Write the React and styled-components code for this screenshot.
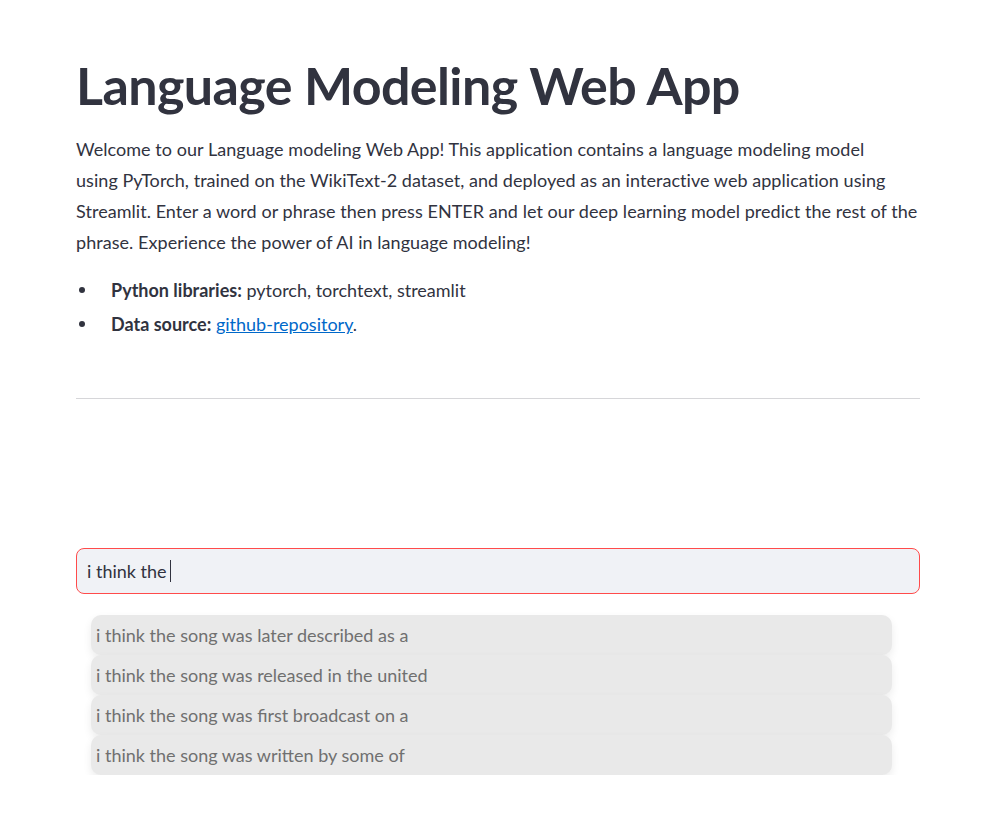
import React from 'react';
import styled, { createGlobalStyle } from 'styled-components';

const GlobalStyle = createGlobalStyle`
  body {
    margin: 0;
    background: #ffffff;
    font-family: Lato, "Noto Sans", sans-serif;
    color: #31333f;
  }
`;

const Page = styled.main`
  width: 844px;
  margin-left: 76px;
  padding-top: 54px;
`;

const Title = styled.h1`
  margin: 0 0 18px;
  font-size: 52px;
  font-weight: 700;
  line-height: 1.2;
  letter-spacing: -0.6px;
`;

const Paragraph = styled.p`
  margin: 0 0 16px;
  font-size: 18px;
  line-height: 30.7px;
  letter-spacing: 0.05px;
  white-space: nowrap;
`;

const List = styled.ul`
  margin: 0;
  padding: 0;
  list-style: none;
  font-size: 18px;
  line-height: 34px;
`;

const Item = styled.li`
  position: relative;
  padding-left: 35px;

  &::before {
    content: '';
    position: absolute;
    left: 3px;
    top: 14px;
    width: 6px;
    height: 6px;
    border-radius: 50%;
    background: #31333f;
  }
`;

const Link = styled.a`
  color: #0068c9;
  text-decoration: underline;
`;

const Divider = styled.hr`
  margin: 57px 0 0;
  border: none;
  border-top: 1px solid #d6d6d9;
`;

const InputBox = styled.div`
  margin-top: 149px;
  height: 44px;
  border: 1px solid #ff4b4b;
  border-radius: 8px;
  background: #f0f2f6;
  display: flex;
  align-items: center;
  padding-left: 10px;
  font-size: 18px;
`;

const Caret = styled.span`
  display: inline-block;
  width: 1px;
  height: 22px;
  background: #31333f;
  margin-left: 3px;
`;

const Suggestions = styled.div`
  margin: 21px 28px 0 15px;
  display: flex;
  flex-direction: column;
`;

const Option = styled.div`
  height: 40px;
  display: flex;
  align-items: center;
  padding-left: 5px;
  background: #e9e9e9;
  border-radius: 10px;
  box-shadow: 0 4px 8px rgba(0, 0, 0, 0.08);
  color: #707070;
  font-size: 18px;
`;

const options = [
  'i think the song was later described as a',
  'i think the song was released in the united',
  'i think the song was first broadcast on a',
  'i think the song was written by some of',
];

export default function App() {
  return (
    <>
      <GlobalStyle />
      <Page>
        <Title>Language Modeling Web App</Title>
        <Paragraph>
          Welcome to our Language modeling Web App! This application contains a language modeling model<br />
          using PyTorch, trained on the WikiText-2 dataset, and deployed as an interactive web application using<br />
          Streamlit. Enter a word or phrase then press ENTER and let our deep learning model predict the rest of the<br />
          phrase. Experience the power of AI in language modeling!
        </Paragraph>
        <List>
          <Item><b>Python libraries:</b> pytorch, torchtext, streamlit</Item>
          <Item><b>Data source:</b> <Link href="#">github-repository</Link>.</Item>
        </List>
        <Divider />
        <InputBox>
          i think the<Caret />
        </InputBox>
        <Suggestions>
          {options.map((o) => (
            <Option key={o}>{o}</Option>
          ))}
        </Suggestions>
      </Page>
    </>
  );
}
